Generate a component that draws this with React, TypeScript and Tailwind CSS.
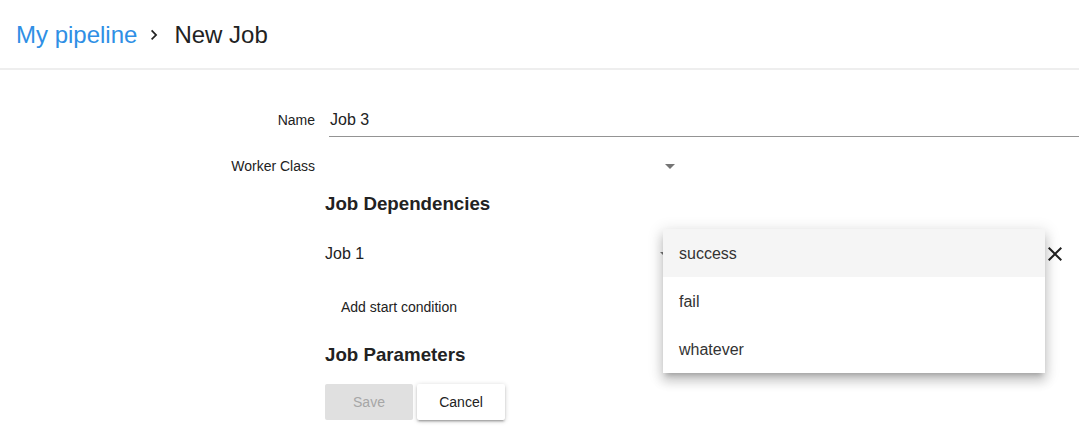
import React from "react";

const Arrow = () => (
  <svg width="24" height="24" viewBox="0 0 24 24" className="fill-[#757575]">
    <path d="M7 10l5 5 5-5z" />
  </svg>
);

export default function App() {
  return (
    <div className="relative w-[1079px] h-[436px] bg-white overflow-hidden text-[#222]" style={{ fontFamily: '"Liberation Sans", Arial, sans-serif' }}>
      <header className="h-[70px] border-b-2 border-[#eeeeee] flex items-center pl-4">
        <div className="flex items-center text-[24px] pt-[2px]">
          <span className="text-[#2f8fe5]">My pipeline</span>
          <svg width="24" height="24" viewBox="0 0 24 24" className="ml-[5px] mr-[8px] fill-[#222]">
            <path d="M10 6L8.59 7.41 13.17 12l-4.58 4.59L10 18l6-6z" transform="scale(0.85) translate(2 2)" />
          </svg>
          <span className="text-[#222]">New Job</span>
        </div>
      </header>

      <div className="flex flex-col">
        <div className="flex items-center h-[37px] mt-[30px]">
          <div className="w-[315px] text-right text-[14px] pt-[3px]">Name</div>
          <div className="ml-[14px] flex-1 h-full flex items-center border-b border-[#949494] text-[16px] pt-[3px] pl-[1px]">
            Job 3
          </div>
        </div>

        <div className="flex items-center h-[36px] mt-[11px]">
          <div className="w-[315px] text-right text-[14px]">Worker Class</div>
          <div className="ml-[14px] w-[353px] flex items-center justify-end">
            <Arrow />
          </div>
        </div>

        <div className="ml-[325px] flex flex-col">
          <h3 className="text-[18.72px] font-bold h-[22px] leading-[22px] mt-[9px]">Job Dependencies</h3>
          <div className="flex items-center h-[48px] mt-[15px]">
            <span className="text-[16px] w-[328px]">Job 1</span>
            <Arrow />
            <div className="w-[366px]" />
            <svg width="24" height="24" viewBox="0 0 24 24" className="fill-[#222]">
              <path d="M19 6.41L17.59 5 12 10.59 6.41 5 5 6.41 10.59 12 5 17.59 6.41 19 12 13.41 17.59 19 19 17.59 13.41 12z" />
            </svg>
          </div>
          <div className="mt-[11px]">
            <button className="h-[36px] px-4 text-[14px] text-[#222]">Add start condition</button>
          </div>
          <h3 className="text-[18.72px] font-bold h-[22px] leading-[22px] mt-[19px]">Job Parameters</h3>
          <div className="flex gap-[4px] mt-[18px]">
            <button className="w-[88px] h-[36px] bg-[#e0e0e0] text-[#a6a6a6] text-[14px] rounded-[2px]">Save</button>
            <button className="w-[88px] h-[36px] bg-white text-[#222] text-[14px] rounded-[2px] shadow-[0_1px_5px_rgba(0,0,0,0.2),0_2px_2px_rgba(0,0,0,0.14),0_3px_1px_-2px_rgba(0,0,0,0.12)]">Cancel</button>
          </div>
        </div>
      </div>

      <div className="absolute left-[663px] top-[229px] w-[382px] bg-white shadow-[0_5px_5px_-3px_rgba(0,0,0,0.2),0_8px_10px_1px_rgba(0,0,0,0.14),0_3px_14px_2px_rgba(0,0,0,0.12)] text-[16px] text-[#333]">
        <div className="h-[48px] flex items-center px-4 pt-[2px] bg-[#f5f5f5]">success</div>
        <div className="h-[48px] flex items-center px-4 pt-[2px]">fail</div>
        <div className="h-[48px] flex items-center px-4 pt-[2px]">whatever</div>
      </div>
    </div>
  );
}
